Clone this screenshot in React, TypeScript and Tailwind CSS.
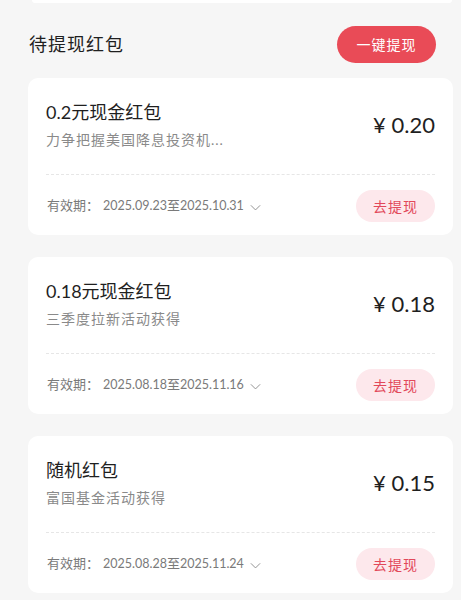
import React from "react";

const FONT = { fontFamily: "Lato, 'Noto Sans CJK SC', sans-serif" };

type Item = { title: string; sub: string; price: string; from: string; to: string };

const items: Item[] = [
  { title: "0.2元现金红包", sub: "力争把握美国降息投资机...", price: "0.20", from: "2025.09.23", to: "2025.10.31" },
  { title: "0.18元现金红包", sub: "三季度拉新活动获得", price: "0.18", from: "2025.08.18", to: "2025.11.16" },
  { title: "随机红包", sub: "富国基金活动获得", price: "0.15", from: "2025.08.28", to: "2025.11.24" },
];

function Chevron() {
  return (
    <svg width="13" height="13" viewBox="0 0 24 24" fill="none" stroke="#8a8a8a" strokeWidth="1.7" strokeLinecap="round" strokeLinejoin="round" className="ml-[5px] mt-[2px]">
      <path d="M4 8.5l8 8 8-8" />
    </svg>
  );
}

function Card({ item }: { item: Item }) {
  return (
    <div className="bg-white rounded-[10px] px-[18px] pt-[21px] pb-[13px]">
      <div className="flex items-center justify-between">
        <div className="flex flex-col">
          <div className="text-[18px] leading-[26px] text-[#1f1f1f]">{item.title}</div>
          <div className="mt-[5px] text-[14px] leading-[20px] text-[#8a8a8a] tracking-[1px]">{item.sub}</div>
        </div>
        <div className="text-[22px] leading-[30px] text-[#1f1f1f]">¥ {item.price}</div>
      </div>
      <div className="mt-[24px] border-t border-dashed border-[#e6e6e6]" />
      <div className="mt-[15px] flex items-center justify-between h-[32px]">
        <div className="flex items-center text-[13px] text-[#7a7a7a]">
          <span className="pl-[1px]">有效期：</span>
          <span className="ml-[4px] text-[12.5px]">{item.from}</span>
          <span>至</span>
          <span className="text-[12.5px]">{item.to}</span>
          <Chevron />
        </div>
        <div className="w-[79px] h-[32px] rounded-full bg-[#fde8ec] text-[#e2485a] text-[14px] flex items-center justify-center tracking-[1px]">
          去提现
        </div>
      </div>
    </div>
  );
}

export default function App() {
  return (
    <div className="w-[461px] h-[600px] bg-[#f6f6f6] overflow-hidden pl-[28px] pr-[8px]" style={FONT}>
      <div className="ml-[4px] mr-[1px] h-[3px] bg-white rounded-b-[8px]" />
      <div className="mt-[23px] h-[37px] flex items-center justify-between pl-[1px] pr-[17px]">
        <div className="text-[18px] text-[#1f1f1f] tracking-[1px]">待提现红包</div>
        <div className="w-[99px] h-[37px] rounded-full bg-[#e94b57] text-white text-[14px] flex items-center justify-center tracking-[1px]">
          一键提现
        </div>
      </div>
      <div className="mt-[15px] flex flex-col gap-[22px]">
        {items.map((it, i) => (
          <Card key={i} item={it} />
        ))}
      </div>
    </div>
  );
}
